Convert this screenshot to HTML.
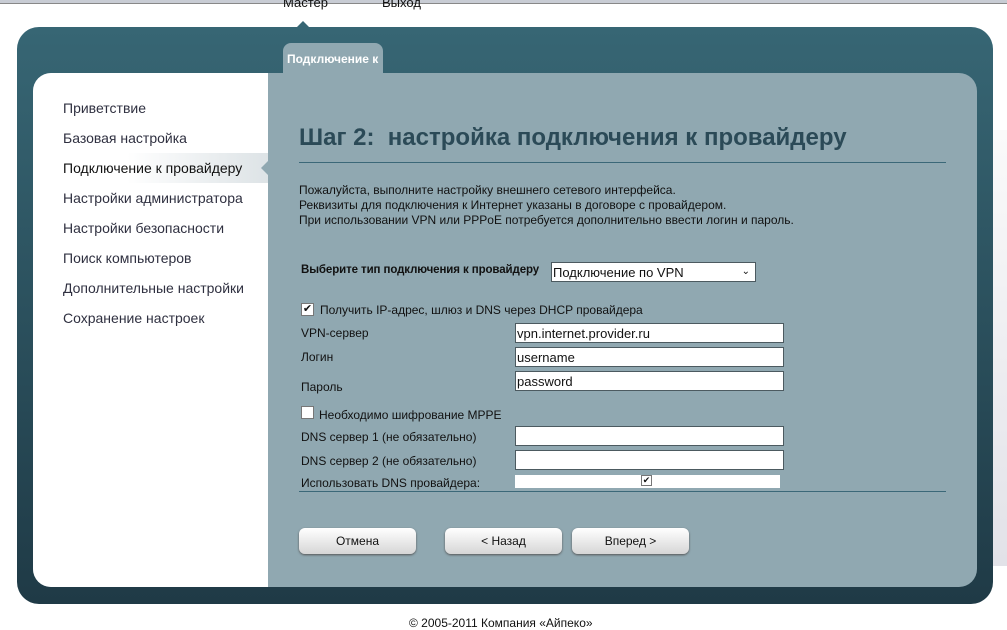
<!DOCTYPE html>
<html><head><meta charset="utf-8"><style>
*{margin:0;padding:0;box-sizing:border-box}
body{width:1007px;height:623px;position:relative;overflow:hidden;background:#fff;font-family:"Liberation Sans",Arial,sans-serif;font-size:12px;color:#111}
.top{position:absolute;left:0;top:0;width:1007px;height:4px;background:#c8ccd4;border-bottom:1px solid #888}
.side{position:absolute;left:993px;top:130px;width:14px;height:436px;background:linear-gradient(#fafafa,#e2e2e8)}
.outer{position:absolute;left:17px;top:27px;width:976px;height:577px;border-radius:22px;background:linear-gradient(#376674,#1f3a46)}
.inner{position:absolute;left:33px;top:73px;width:944px;height:514px;border-radius:18px;background:#90a8b1;overflow:hidden}
.left{position:absolute;left:0;top:0;width:235px;height:514px;background:#fff}
.left div{position:absolute;left:30px;font-size:14px;color:#2f3040}
.act{position:absolute;left:0;top:80px;width:235px;height:30px;background:linear-gradient(90deg,#fff 40%,#dde3e6)}
.tab{position:absolute;left:283px;top:43px;width:100px;height:31px;background:#90a8b1;border-radius:8px 8px 0 0;color:#fff;font-weight:bold;font-size:12px;padding:9px 0 0 4px}
.nav{position:absolute;top:0;font-size:13px;color:#111;line-height:13px}
h1{position:absolute;left:299px;top:124px;font-size:24px;color:#2b4a57;font-weight:bold}
.line{position:absolute;left:299px;width:647px;height:1px;background:#3b6878}
.t{position:absolute;font-size:12px;color:#111;white-space:nowrap}
.inp{position:absolute;left:515px;width:269px;height:20px;background:#fff;border:1px solid #4c5a60;font-size:13px;padding:1px 1px;line-height:17px}
.cb{position:absolute;width:13px;height:13px;background:#fff;border:1px solid #777;font-size:11px;line-height:11px;text-align:center}
.btn{position:absolute;top:528px;width:117px;height:26px;border-radius:6px;background:linear-gradient(#fff,#d6d6d6);box-shadow:0 1px 2px #555;text-align:center;line-height:26px;font-size:12px}
</style></head><body>
<div class="top"></div>
<div class="side"></div>
<div class="nav" style="left:283px;top:-4px">Мастер</div>
<div class="nav" style="left:382px;top:-4px">Выход</div>
<div class="outer"></div>
<div style="position:absolute;left:297px;top:21px;width:0;height:0;border-left:6px solid transparent;border-right:6px solid transparent;border-bottom:6px solid #376674"></div>
<div class="tab">Подключение к</div>
<div class="inner">
 <div class="left">
  <div class="act" style="left:0"></div>
  <div style="top:27px">Приветствие</div>
  <div style="top:57px">Базовая настройка</div>
  <div style="top:87px;color:#111">Подключение к провайдеру</div>
  <div style="top:117px">Настройки администратора</div>
  <div style="top:147px">Настройки безопасности</div>
  <div style="top:177px">Поиск компьютеров</div>
  <div style="top:207px">Дополнительные настройки</div>
  <div style="top:237px">Сохранение настроек</div>
 </div>
 <div style="position:absolute;left:228px;top:88px;border-top:7px solid transparent;border-bottom:7px solid transparent;border-right:7px solid #90a8b1"></div>
</div>
<h1>Шаг 2:&nbsp; настройка подключения к провайдеру</h1>
<div class="line" style="top:162px"></div>
<div class="t" style="left:299px;top:183px;line-height:15px">Пожалуйста, выполните настройку внешнего сетевого интерфейса.<br>Реквизиты для подключения к Интернет указаны в договоре с провайдером.<br>При использовании VPN или PPPoE потребуется дополнительно ввести логин и пароль.</div>
<div class="t" style="left:301px;top:264px;font-weight:bold;font-size:11.5px;letter-spacing:-0.1px">Выберите тип подключения к провайдеру</div>
<div class="inp" style="left:551px;top:262px;width:205px;font-size:13px">Подключение по VPN<span style="position:absolute;right:5px;top:0;font-size:10px">&#8964;</span></div>
<div class="cb" style="left:301px;top:303px">✔</div>
<div class="t" style="left:320px;top:303px">Получить IP-адрес, шлюз и DNS через DHCP провайдера</div>
<div class="t" style="left:301px;top:326px">VPN-сервер</div>
<div class="inp" style="top:323px">vpn.internet.provider.ru</div>
<div class="t" style="left:301px;top:350px">Логин</div>
<div class="inp" style="top:347px">username</div>
<div class="t" style="left:301px;top:380px">Пароль</div>
<div class="inp" style="top:371px">password</div>
<div class="cb" style="left:301px;top:406px"></div>
<div class="t" style="left:319px;top:408px">Необходимо шифрование MPPE</div>
<div class="t" style="left:301px;top:430px">DNS сервер 1 (не обязательно)</div>
<div class="inp" style="top:426px"></div>
<div class="t" style="left:301px;top:454px">DNS сервер 2 (не обязательно)</div>
<div class="inp" style="top:450px"></div>
<div class="t" style="left:301px;top:476px">Использовать DNS провайдера:</div>
<div style="position:absolute;left:515px;top:475px;width:265px;height:13px;background:#fff"></div>
<div class="cb" style="left:641px;top:475px;width:11px;height:11px;font-size:9px;line-height:9px">✔</div>
<div class="line" style="top:491px"></div>
<div class="btn" style="left:299px">Отмена</div>
<div class="btn" style="left:445px">&lt; Назад</div>
<div class="btn" style="left:572px">Вперед &gt;</div>
<div class="t" style="left:409px;top:616px;font-size:12px">© 2005-2011 Компания «Айпеко»</div>
</body></html>
